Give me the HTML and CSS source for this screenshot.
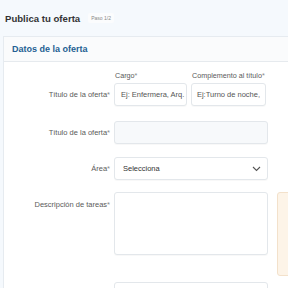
FILE: index.html
```html
<!DOCTYPE html>
<html>
<head>
<meta charset="utf-8">
<link rel="stylesheet" href="styles.css">
</head>
<body>
<div class="page-head">
  <h1 class="title">Publica tu oferta</h1>
  <span class="badge">Paso 1/2</span>
</div>
<section class="card">
  <div class="card-head">Datos de la oferta</div>
  <div class="card-body">
    <div class="form">
      <div class="row row-split">
        <label class="label">Título de la oferta<span class="req">*</span></label>
        <div class="split">
          <div class="field">
            <span class="sublabel">Cargo<span class="req">*</span></span>
            <div class="input w1">Ej: Enfermera, Arq.</div>
          </div>
          <div class="field">
            <span class="sublabel">Complemento al título<span class="req">*</span></span>
            <div class="input w2">Ej:Turno de noche,</div>
          </div>
        </div>
      </div>
      <div class="row">
        <label class="label">Título de la oferta<span class="req">*</span></label>
        <div class="input full disabled"></div>
      </div>
      <div class="row row-area">
        <label class="label">Área<span class="req">*</span></label>
        <div class="input full select"><span class="val">Selecciona</span>
          <svg class="chev" width="9" height="6" viewBox="0 0 9 6"><path d="M1 1l3.5 3.5L8 1" fill="none" stroke="#555" stroke-width="1.1"/></svg>
        </div>
      </div>
      <div class="row row-top">
        <label class="label">Descripción de tareas<span class="req">*</span></label>
        <div class="input full textarea"></div>
      </div>
      <div class="row row-last">
        <label class="label"></label>
        <div class="input full"></div>
      </div>
    </div>
    <aside class="note"></aside>
  </div>
</section>
</body>
</html>
```
FILE: styles.css
```css
html, body {
  margin: 0;
  padding: 0;
}
body {
  background: #f5f9fd;
  font-family: "Liberation Sans", Arial, sans-serif;
  color: #444;
  width: 288px;
  height: 288px;
  overflow: hidden;
}
.page-head {
  display: flex;
  align-items: center;
  gap: 8px;
  height: 36px;
  padding-left: 5px;
  box-sizing: border-box;
}
.title {
  margin: 0;
  font-size: 9.6px;
  font-weight: bold;
  color: #333;
}
.badge {
  font-size: 5px;
  color: #888;
  background: #fbfcfd;
  border-radius: 2px;
  padding: 2px 3px;
}
.card {
  margin-left: 3px;
  width: 320px;
  border: 1px solid #e6ebf0;
  background: #fff;
  overflow: hidden;
}
.card-head {
  height: 25px;
  box-sizing: border-box;
  background: #fafbfc;
  border-bottom: 1px solid #e6eaee;
  display: flex;
  align-items: center;
  padding-left: 8px;
  font-size: 9px;
  font-weight: bold;
  color: #245f93;
}
.card-body {
  display: flex;
  align-items: flex-start;
  padding-top: 9px;
}
.form {
  flex: none;
}
.row {
  display: grid;
  grid-template-columns: 106px 154px;
  column-gap: 4px;
  align-items: center;
  margin-bottom: 13px;
}
.row-split {
  align-items: end;
  margin-bottom: 15px;
}
.row-split .label {
  height: 22px;
  line-height: 22px;
}
.row-area {
  margin-bottom: 12px;
}
.row-top {
  align-items: start;
}
.row-top .label {
  padding-top: 8px;
}
.label {
  text-align: right;
  font-size: 7.5px;
  color: #5a5a5a;
}
.req {
  color: #888;
}
.split {
  display: flex;
  gap: 4px;
}
.field {
  display: flex;
  flex-direction: column;
  gap: 3px;
}
.sublabel {
  font-size: 7.2px;
  color: #5a5a5a;
  padding-left: 1px;
}
.input {
  box-sizing: border-box;
  height: 23px;
  border: 1px solid #e3e7eb;
  border-radius: 3px;
  background: #fff;
  box-shadow: 0 1px 1px rgba(0, 0, 0, 0.03);
  font-size: 7.5px;
  color: #555;
  display: flex;
  align-items: center;
  padding-left: 6px;
}
.w1 { width: 73px; }
.w2 { width: 75px; justify-content: center; padding-left: 0; }
.full { width: 154px; }
.disabled { background: #f7f9fb; }
.select {
  justify-content: space-between;
  padding-left: 8px;
  padding-right: 6px;
  color: #333;
}
.textarea {
  height: 63px;
}
.row-last {
  margin-top: 27px;
}
.note {
  flex: none;
  margin-top: 121px;
  margin-left: 9px;
  width: 40px;
  height: 82px;
  background: #fdf4e8;
  border: 1px solid #f3e1cb;
  border-radius: 3px;
}
```
